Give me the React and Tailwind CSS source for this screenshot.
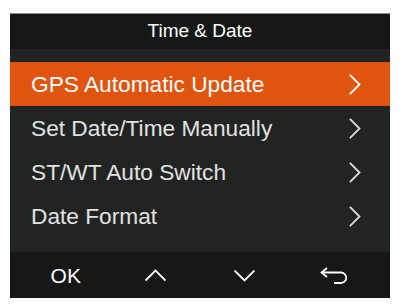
import React from "react";

const Chevron = () => (
  <svg width="12" height="21" viewBox="0 0 12 21" fill="none" className="block">
    <path d="M1.5 1.5 L10.5 10.5 L1.5 19.5" stroke="currentColor" strokeWidth="1.8" strokeLinecap="square" strokeLinejoin="miter" />
  </svg>
);

const rows = [
  { label: "GPS Automatic Update", active: true },
  { label: "Set Date/Time Manually" },
  { label: "ST/WT Auto Switch" },
  { label: "Date Format" },
];

export default function App() {
  return (
    <div className="w-[404px] h-[308px] bg-white pl-[10px] pt-[13px]" style={{ fontFamily: '"Liberation Sans", Arial, sans-serif' }}>
      <div className="w-[380px] h-[285px] flex flex-col bg-[#222423] border-t border-[#8a8a8a]">
        <div className="h-[35px] bg-[#171717] flex items-center justify-center pb-[3px] text-white text-[19px] leading-none">
          Time &amp; Date
        </div>
        <div className="h-[13px]" />
        {rows.map((r) => (
          <div
            key={r.label}
            className={
              "h-[44px] flex items-center justify-between pl-[21px] pr-[29px] text-[22.7px] leading-none " +
              (r.active ? "bg-[#e0540f] text-white" : "text-[#e2e2e2]")
            }
          >
            <span>{r.label}</span>
            <span className={r.active ? "text-white" : "text-[#dcdcdc]"}>
              <Chevron />
            </span>
          </div>
        ))}
        <div className="h-[14px]" />
        <div className="h-[46px] bg-[#171717] grid grid-cols-4 px-[11px] items-center text-white">
          <div className="flex justify-center text-[21px] leading-none">OK</div>
          <div className="flex justify-center">
            <svg width="23" height="13" viewBox="0 0 23 13" fill="none">
              <path d="M1.5 11.5 L11.5 1.5 L21.5 11.5" stroke="white" strokeWidth="1.8" />
            </svg>
          </div>
          <div className="flex justify-center">
            <svg width="23" height="13" viewBox="0 0 23 13" fill="none">
              <path d="M1.5 1.5 L11.5 11.5 L21.5 1.5" stroke="white" strokeWidth="1.8" />
            </svg>
          </div>
          <div className="flex justify-center">
            <svg width="28" height="17" viewBox="0 0 28 17" fill="none">
              <path d="M7 1 L1.5 5.5 L7 10" stroke="white" strokeWidth="1.8" />
              <path d="M1.5 5.5 H21 A5.25 5.25 0 0 1 21 16 H14" stroke="white" strokeWidth="1.8" />
            </svg>
          </div>
        </div>
      </div>
    </div>
  );
}
